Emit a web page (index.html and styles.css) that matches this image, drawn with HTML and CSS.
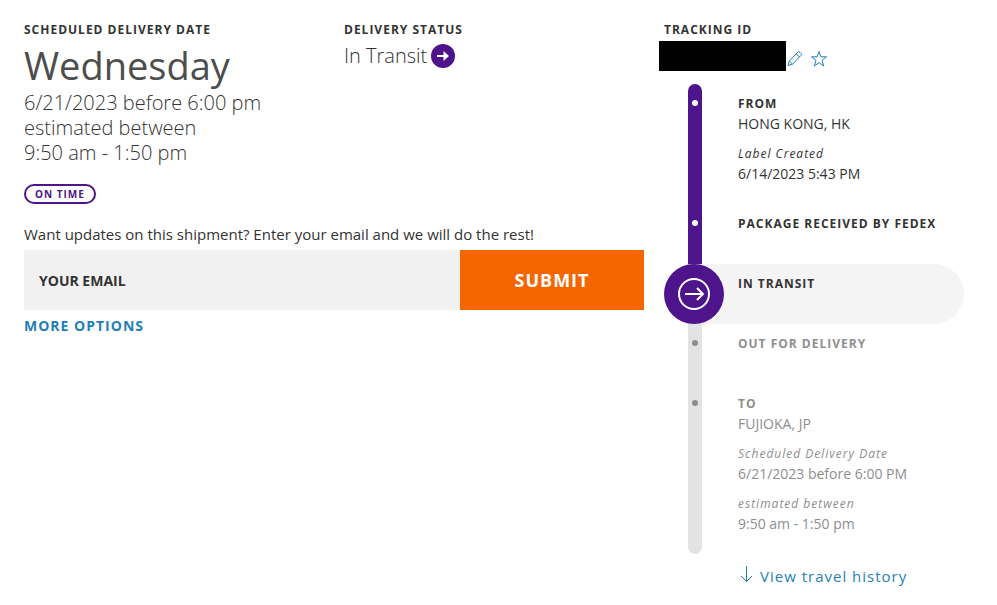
FILE: index.html
```
<!DOCTYPE html>
<html lang="en">
<head>
<meta charset="utf-8">
<meta name="viewport" content="width=device-width, initial-scale=1">
<title>Shipment tracking</title>
<link rel="stylesheet" href="styles.css">
</head>
<body>
<main class="shipment">
  <div class="overview">
    <div class="summary">
      <section>
        <h2 class="label">SCHEDULED DELIVERY DATE</h2>
        <p class="day">Wednesday</p>
        <p class="lead">6/21/2023 before 6:00 pm<br>estimated between<br>9:50 am - 1:50 pm</p>
        <span class="badge">ON TIME</span>
      </section>
      <section>
        <h2 class="label">DELIVERY STATUS</h2>
        <p class="lead status">In Transit
          <svg width="24" height="24" viewBox="0 0 24 24" aria-hidden="true"><circle cx="12" cy="12" r="12" fill="#4d148c"/><path d="M6 11h6.500V7l5.500 5-5.500 5v-4H6z" fill="#fff"/></svg>
        </p>
      </section>
    </div>
    <form class="updates">
      <label class="prompt" for="email">Want updates on this shipment? Enter your email and we will do the rest!</label>
      <div class="field">
        <input class="email" id="email" type="email" placeholder="YOUR EMAIL">
        <button class="submit" type="submit">SUBMIT</button>
      </div>
      <a class="more" href="#">MORE OPTIONS</a>
    </form>
  </div>

  <section class="tracking">
    <h2 class="label">TRACKING ID</h2>
    <div class="tracking-id">
      <span class="redacted"></span>
      <button class="icon-button" type="button" aria-label="Edit nickname">
        <svg width="18" height="18" viewBox="0 0 18 18" fill="none" stroke="#1f7fb8" stroke-linejoin="round"><path d="M2 15.500l1.300-4.500L11.800 2.200q1-1 2 0l1.200 1.200q1 1 0 2L6.500 14.200zM3.300 11L6.500 14.200M10.300 3.800l3.200 3.200"/></svg>
      </button>
      <button class="icon-button" type="button" aria-label="Add to watch list">
        <svg width="18" height="18" viewBox="0 0 18 18" fill="none" stroke="#1f7fb8"><path d="M9 1.500l1.900 5.300h5.600l-4.500 3.500 1.700 5.700L9 12.700 4.300 16 6 10.300 1.500 6.800h5.600z"/></svg>
      </button>
    </div>
    <ol class="timeline">
      <li class="stage done">
        <span class="track"><span class="dot"></span></span>
        <div class="details">
          <h3 class="label">FROM</h3>
          <p>HONG KONG, HK</p>
          <p class="note">Label Created</p>
          <p>6/14/2023 5:43 PM</p>
        </div>
      </li>
      <li class="stage done">
        <span class="track"><span class="dot"></span></span>
        <div class="details"><h3 class="label">PACKAGE RECEIVED BY FEDEX</h3></div>
      </li>
      <li class="stage current">
        <svg width="60" height="60" viewBox="0 0 60 60" aria-hidden="true"><circle cx="30" cy="30" r="30" fill="#4d148c"/><g fill="none" stroke="#fff" stroke-width="2"><circle cx="30" cy="30" r="15"/><path d="M21 30h18.500M33 24l6 6-6 6"/></g></svg>
        <div class="details"><h3 class="label">IN TRANSIT</h3></div>
      </li>
      <li class="stage pending">
        <span class="track"><span class="dot"></span></span>
        <div class="details"><h3 class="label">OUT FOR DELIVERY</h3></div>
      </li>
      <li class="stage pending">
        <span class="track"><span class="dot"></span></span>
        <div class="details">
          <h3 class="label">TO</h3>
          <p>FUJIOKA, JP</p>
          <p class="note">Scheduled Delivery Date</p>
          <p>6/21/2023 before 6:00 PM</p>
          <p class="note">estimated between</p>
          <p>9:50 am - 1:50 pm</p>
        </div>
      </li>
    </ol>
    <a class="history" href="#">
      <svg width="16" height="20" viewBox="0 0 16 20" fill="none" stroke="#1f7fb8" aria-hidden="true"><path d="M8.500 0v15.500M3 10l5.500 5.500L14 10"/></svg>
      View travel history
    </a>
  </section>
</main>
</body>
</html>
```
FILE: styles.css
```
* {
  box-sizing: border-box;
}

body,
h2,
h3,
p,
ol {
  margin: 0;
  padding: 0;
}

body {
  background: #fff;
  color: #333;
  font: 14px/20px "Open Sans", "Noto Sans", sans-serif;
}

a {
  color: #1f7fb8;
  text-decoration: none;
}

button,
input {
  border: 0;
  border-radius: 0;
  font-family: inherit;
}

svg {
  display: block;
  flex: none;
}

.shipment {
  display: grid;
  grid-template-columns: repeat(3, 1fr);
  column-gap: 20px;
  padding: 20px 33px 20px 24px;
}

.overview {
  grid-column: span 2;
}

.summary {
  display: grid;
  grid-template-columns: 1fr 1fr;
  column-gap: 20px;
}

.label {
  font-size: 12px;
  font-weight: 700;
  line-height: 20px;
  letter-spacing: 1px;
}

.day {
  color: #4d4d4d;
  font-size: 38px;
  line-height: 50px;
}

.lead {
  font-size: 20px;
  font-weight: 300;
  line-height: 25px;
}

.status {
  display: flex;
  align-items: center;
  gap: 4px;
  padding-top: 3px;
}

.badge {
  display: inline-block;
  margin-top: 19px;
  padding: 0 9px;
  border: 2px solid #4d148c;
  border-radius: 10px;
  color: #4d148c;
  font-size: 10px;
  font-weight: 700;
  line-height: 16px;
  letter-spacing: 1px;
}

.updates {
  margin-top: 20px;
}

.prompt {
  display: block;
  padding-bottom: 2px;
  font-size: 15px;
  line-height: 20px;
}

.field {
  display: flex;
  margin-top: 4px;
}

.email {
  flex: 1;
  min-width: 0;
  height: 60px;
  padding: 0 15px;
  background: #f1f1f1;
  color: #333;
  font-size: 14px;
}

.email::placeholder {
  color: #333;
  font-weight: 700;
  opacity: 1;
}

.submit {
  width: 184px;
  background: #f56600;
  color: #fff;
  font-size: 18px;
  font-weight: 700;
  letter-spacing: 1px;
}

.more {
  display: inline-block;
  margin-top: 6px;
  font-weight: 700;
  letter-spacing: 1px;
}

.tracking-id {
  display: flex;
  align-items: center;
  margin-left: -5px;
  padding-top: 1px;
}

.redacted {
  width: 127px;
  height: 30px;
  background: #000;
}

.icon-button {
  padding: 6px 6px 0 0;
  background: none;
}

.timeline {
  margin-top: 13px;
  list-style: none;
}

.stage {
  display: grid;
  grid-template-columns: 60px 1fr;
  column-gap: 14px;
  min-height: 60px;
}

.track {
  width: 14px;
  margin-left: 24px;
  padding: 16px 4px;
  background: #4d148c;
}

.dot {
  display: block;
  height: 6px;
  border-radius: 3px;
  background: #fff;
}

.stage:first-child .track {
  border-radius: 7px 7px 0 0;
}

.stage:last-child .track {
  border-radius: 0 0 7px 7px;
}

.details {
  padding: 10px 0 20px;
}

.current {
  border-radius: 30px;
  background: #f4f4f4;
}

.pending {
  color: #8e8e8e;
}

.pending .track {
  background: #e3e3e3;
}

.pending .dot {
  background: #8e8e8e;
}

.note {
  margin-top: 10px;
  font-size: 12px;
  font-style: italic;
  letter-spacing: 1px;
}

.history {
  display: flex;
  align-items: center;
  gap: 6px;
  margin: 12px 0 0 74px;
  font-size: 15px;
  letter-spacing: 1px;
}
```
